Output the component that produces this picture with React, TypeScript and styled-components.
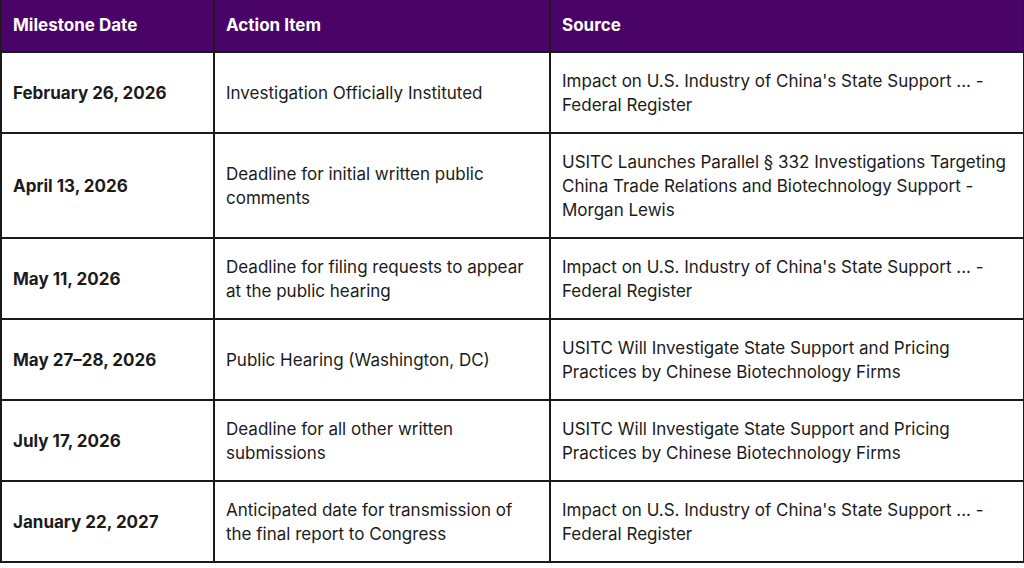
import styled, { createGlobalStyle } from 'styled-components';

const GlobalStyle = createGlobalStyle`
  html, body {
    margin: 0;
    padding: 0;
    background: #ffffff;
  }
  body {
    font-family: Inter, 'Noto Sans', sans-serif;
    color: #1b1b1b;
  }
`;

const STable = styled.table`
  width: 1023px;
  border-collapse: collapse;
  table-layout: fixed;
  font-size: 17px;
  line-height: 24px;
`;

const SCol = styled.col<{ $width: number }>`
  width: ${({ $width }) => $width}px;
`;

const SHeadCell = styled.th`
  box-sizing: border-box;
  background: #4a0468;
  color: #ffffff;
  font-weight: 650;
  text-align: left;
  padding: 13px 11px 14px 11px;
  border: 2px solid #1a1a1a;
  border-top: none;
`;

const SCell = styled.td<{ $bold?: boolean }>`
  box-sizing: border-box;
  padding: 15.5px 11px 15.5px 11px;
  border: 2px solid #1a1a1a;
  vertical-align: middle;
  font-weight: ${({ $bold }) => ($bold ? 700 : 400)};
  color: #1b1b1b;
`;

interface Milestone {
  date: string;
  action: string;
  source: string;
}

const milestones: Milestone[] = [
  {
    date: 'February 26, 2026',
    action: 'Investigation Officially Instituted',
    source: "Impact on U.S. Industry of China's State Support ... - Federal Register",
  },
  {
    date: 'April 13, 2026',
    action: 'Deadline for initial written public comments',
    source:
      'USITC Launches Parallel § 332 Investigations Targeting China Trade Relations and Biotechnology Support - Morgan Lewis',
  },
  {
    date: 'May 11, 2026',
    action: 'Deadline for filing requests to appear at the public hearing',
    source: "Impact on U.S. Industry of China's State Support ... - Federal Register",
  },
  {
    date: 'May 27–28, 2026',
    action: 'Public Hearing (Washington, DC)',
    source: 'USITC Will Investigate State Support and Pricing Practices by Chinese Biotechnology Firms',
  },
  {
    date: 'July 17, 2026',
    action: 'Deadline for all other written submissions',
    source: 'USITC Will Investigate State Support and Pricing Practices by Chinese Biotechnology Firms',
  },
  {
    date: 'January 22, 2027',
    action: 'Anticipated date for transmission of the final report to Congress',
    source: "Impact on U.S. Industry of China's State Support ... - Federal Register",
  },
];

const App = () => {
  return (
    <>
      <GlobalStyle />
      <STable>
        <colgroup>
          <SCol $width={213} />
          <SCol $width={336} />
          <SCol $width={474} />
        </colgroup>
        <thead>
          <tr>
            <SHeadCell>Milestone Date</SHeadCell>
            <SHeadCell>Action Item</SHeadCell>
            <SHeadCell>Source</SHeadCell>
          </tr>
        </thead>
        <tbody>
          {milestones.map((item) => (
            <tr key={item.date}>
              <SCell $bold>{item.date}</SCell>
              <SCell>{item.action}</SCell>
              <SCell>{item.source}</SCell>
            </tr>
          ))}
        </tbody>
      </STable>
    </>
  );
};

export default App;
